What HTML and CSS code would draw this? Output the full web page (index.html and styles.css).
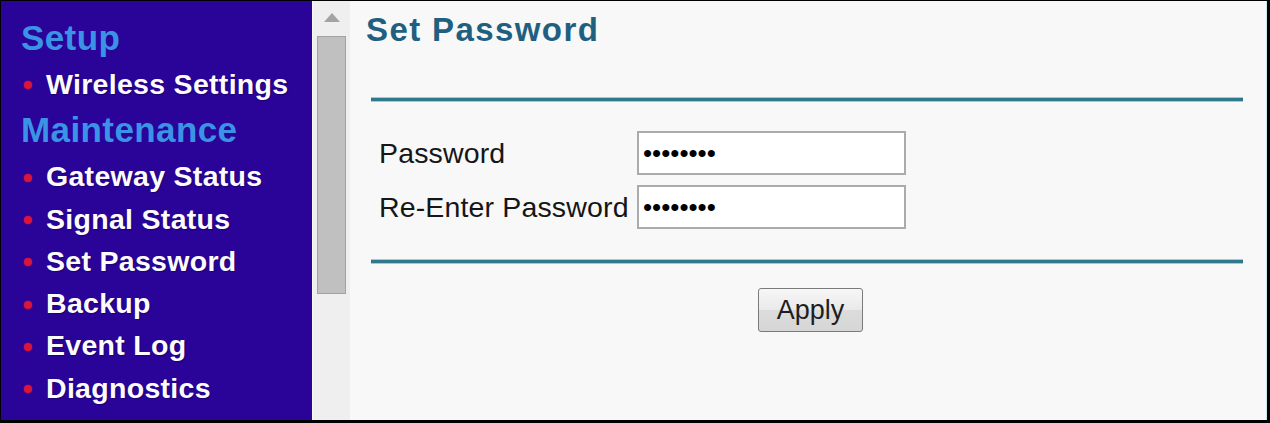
FILE: index.html
```html
<!DOCTYPE html>
<html lang="en">
<head>
<meta charset="utf-8">
<title>Set Password</title>
<link rel="stylesheet" href="styles.css">
</head>
<body>
<div class="frame">
  <nav class="sidebar">
    <div class="menu-head">Setup</div>
    <ul class="menu">
      <li><span class="dot"></span>Wireless Settings</li>
    </ul>
    <div class="menu-head">Maintenance</div>
    <ul class="menu">
      <li><span class="dot"></span>Gateway Status</li>
      <li><span class="dot"></span>Signal Status</li>
      <li><span class="dot"></span>Set Password</li>
      <li><span class="dot"></span>Backup</li>
      <li><span class="dot"></span>Event Log</li>
      <li><span class="dot"></span>Diagnostics</li>
    </ul>
    <div class="menu-head">Advanced</div>
  </nav>
  <div class="scrollbar">
    <span class="arrow"></span>
    <span class="thumb"></span>
  </div>
  <main class="content">
    <h1 class="title">Set Password</h1>
    <div class="panel">
      <div class="rule"></div>
      <form class="form">
        <label class="label" for="pw1">Password</label>
        <input class="field" id="pw1" type="password" value="password">
        <label class="label" for="pw2">Re-Enter Password</label>
        <input class="field" id="pw2" type="password" value="password">
      </form>
      <div class="rule rule-bottom"></div>
      <div class="actions">
        <button class="btn" type="button">Apply</button>
      </div>
    </div>
  </main>
</div>
</body>
</html>
```

FILE: styles.css
```css
html, body {
  margin: 0;
  padding: 0;
  height: 100%;
  background: #000;
}

.frame {
  display: flex;
  height: 100vh;
  box-sizing: border-box;
  border-style: solid;
  border-color: #000;
  border-width: 1px 3px 3px 1px;
  overflow: hidden;
  font-family: "Liberation Sans", Arial, sans-serif;
}

/* ---------- sidebar ---------- */
.sidebar {
  width: 311px;
  flex: none;
  background: #2a0399;
  padding-top: 12px;
  box-sizing: border-box;
  overflow: hidden;
}

.menu-head {
  font-size: 35px;
  font-weight: bold;
  line-height: 50px;
  letter-spacing: 0.4px;
  color: #3b93e6;
  padding-left: 20px;
  white-space: nowrap;
}

.menu {
  list-style: none;
  margin: 0;
  padding: 0;
}

.menu li {
  font-size: 28.5px;
  font-weight: bold;
  line-height: 42.3px;
  letter-spacing: 0.3px;
  color: #fcfcff;
  text-shadow: 1px 1px 1px rgba(20, 0, 60, 0.45);
  padding-left: 23px;
  white-space: nowrap;
}

.dot {
  display: inline-block;
  width: 8px;
  height: 8px;
  border-radius: 50%;
  background: #d8163c;
  box-shadow: 0 0 2px rgba(216, 22, 60, 0.7);
  vertical-align: middle;
  margin-right: 14px;
  position: relative;
  top: -1px;
}

/* ---------- scrollbar ---------- */
.scrollbar {
  width: 38px;
  flex: none;
  box-sizing: border-box;
  background: #efefef;
  border-left: 1px solid #f8f8f8;
  display: flex;
  flex-direction: column;
  align-items: center;
  padding-top: 12px;
}

.arrow {
  width: 0;
  height: 0;
  border-left: 8px solid transparent;
  border-right: 8px solid transparent;
  border-bottom: 9px solid #a3a3a3;
}

.thumb {
  width: 29px;
  height: 258px;
  box-sizing: border-box;
  margin-top: 14px;
  background: #c0c0c0;
  border: 1px solid #a2a2a2;
}

/* ---------- main content ---------- */
.content {
  flex: 1;
  background: #f8f8f8;
  border-right: 1px solid #c4e8f0;
  padding-top: 9px;
  box-sizing: border-box;
}

.title {
  margin: 0;
  padding-left: 16px;
  font-size: 33px;
  font-weight: bold;
  line-height: 40px;
  letter-spacing: 1.4px;
  color: #1f5f80;
}

.panel {
  margin: 47px 23px 0 21px;
}

.rule {
  height: 3px;
  background: #30788c;
  border-top: 1px solid #8ed2e2;
  border-bottom: 1px solid #8ed2e2;
}

.form {
  display: grid;
  grid-template-columns: 266px 269px;
  row-gap: 10px;
  align-items: center;
  margin: 29px 0 0 0;
}

.label {
  padding-left: 8px;
  font-size: 28.5px;
  letter-spacing: 0.15px;
  color: #161616;
  white-space: nowrap;
}

.field {
  box-sizing: border-box;
  width: 269px;
  height: 44px;
  margin: 0;
  padding: 0 4px;
  border: 2px solid #ababab;
  background: #fff;
  font-family: "Liberation Sans", Arial, sans-serif;
  font-size: 26px;
  color: #000;
  outline: none;
}

.rule-bottom {
  margin-top: 30px;
}

.actions {
  display: flex;
  justify-content: center;
  padding-left: 7px;
  margin-top: 24px;
}

.btn {
  width: 105px;
  height: 44px;
  padding: 0;
  font-family: "Liberation Sans", Arial, sans-serif;
  font-size: 27px;
  color: #1e1e1e;
  border: 1px solid #7a7a7a;
  border-radius: 3px;
  background: linear-gradient(#f7f7f7, #e9e9e9 50%, #dcdcdc 51%, #d6d6d6);
}
```
